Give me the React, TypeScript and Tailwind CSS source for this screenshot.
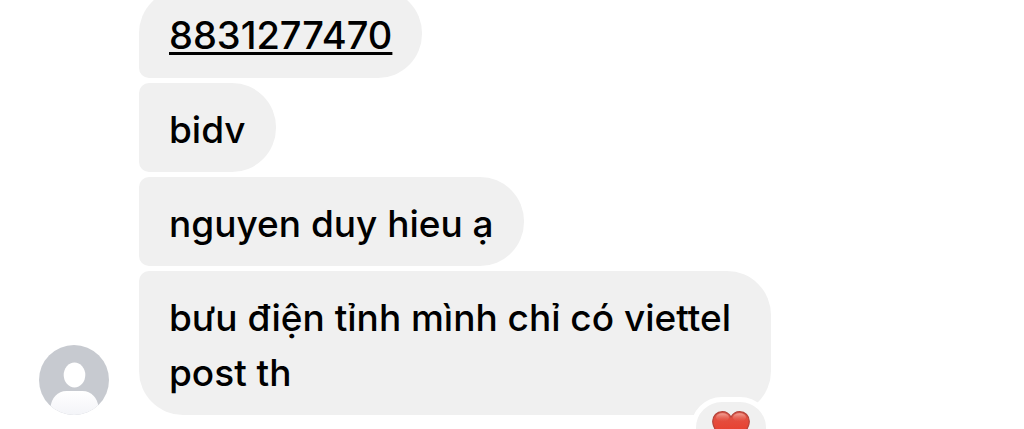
import clsx from "clsx";

interface Message {
  id: number;
  text: string;
  isNumber?: boolean;
  reaction?: boolean;
}

const messages: Message[] = [
  { id: 1, text: "8831277470", isNumber: true },
  { id: 2, text: "bidv" },
  { id: 3, text: "nguyen duy hieu ạ" },
  { id: 4, text: "bưu điện tỉnh mình chỉ có viettel post th", reaction: true },
];

function Avatar() {
  return (
    <svg viewBox="0 0 70 70" className="size-[70px] shrink-0" role="img" aria-label="Avatar">
      <defs>
        <clipPath id="avatar-clip">
          <circle cx="35" cy="35" r="35" />
        </clipPath>
        <linearGradient id="avatar-body" x1="0" y1="0" x2="0" y2="1">
          <stop offset="0" stopColor="#ffffff" />
          <stop offset="1" stopColor="#f3f4f8" />
        </linearGradient>
      </defs>
      <g clipPath="url(#avatar-clip)">
        <rect width="70" height="70" fill="#c7cad0" />
        <ellipse cx="35.5" cy="30" rx="10.8" ry="12.4" fill="#ffffff" />
        <path d="M11.500 62C12.500 53 18.500 46 27.500 46H43.500C52.500 46 58.500 53 59.500 62V70H11.500Z" fill="url(#avatar-body)" />
      </g>
    </svg>
  );
}

function HeartIcon() {
  return (
    <svg viewBox="0 0 38 34" className="h-[34px] w-[38px]" aria-hidden="true">
      <defs>
        <linearGradient id="heart-fill" x1="0" y1="0" x2="0" y2="1">
          <stop offset="0" stopColor="#d9574b" />
          <stop offset="0.300" stopColor="#e54b3c" />
          <stop offset="0.600" stopColor="#e8402f" />
          <stop offset="1" stopColor="#cf2a1e" />
        </linearGradient>
        <linearGradient id="heart-shine" x1="0" y1="0" x2="0" y2="1">
          <stop offset="0" stopColor="#f7b5aa" stopOpacity="0.800" />
          <stop offset="1" stopColor="#ee6a5a" stopOpacity="0" />
        </linearGradient>
      </defs>
      <path
        d="M19 6C17 2.500 14 .7 10.300 .7C4.800 .7 .7 4.800 .7 10.500C.7 19.500 10 27 19 33.300C28 27 37.300 19.500 37.300 10.500C37.300 4.800 33.200 .7 27.700 .7C24 .7 21 2.500 19 6Z"
        fill="url(#heart-fill)"
        stroke="#b5453c"
        strokeWidth="1.2"
      />
      <ellipse cx="10.500" cy="6.500" rx="6.500" ry="4.200" fill="url(#heart-shine)" />
      <ellipse cx="27.500" cy="6.500" rx="6.500" ry="4.200" fill="url(#heart-shine)" />
    </svg>
  );
}

function MessageBubble({ message, isFirst, isLast }: { message: Message; isFirst: boolean; isLast: boolean }) {
  return (
    <li
      className={clsx(
        "relative max-w-[632px] rounded-r-[44px] bg-[#f0f0f0] px-[30px] pt-[19px] pb-[15px]",
        isFirst ? "rounded-tl-[44px]" : "rounded-tl-[10px]",
        isLast ? "rounded-bl-[44px]" : "rounded-bl-[10px]",
      )}
    >
      {message.isNumber ? (
        <a
          href={`tel:${message.text}`}
          className="block text-[38px] leading-[55px] underline decoration-3 underline-offset-3"
        >
          {message.text}
        </a>
      ) : (
        <p>{message.text}</p>
      )}
      {message.reaction && (
        <button
          type="button"
          aria-label="Reaction"
          className="absolute right-0 top-full -mt-[18px] rounded-full border-[5px] border-white bg-[#f0f0f0] px-4 py-[9px]"
        >
          <HeartIcon />
        </button>
      )}
    </li>
  );
}

export default function App() {
  return (
    <main className="h-screen overflow-hidden bg-white font-['Inter','Noto_Sans',sans-serif] text-[37px] leading-[55px] font-medium text-black">
      <div className="-mt-[11px] flex items-end gap-[30px] px-[39px]">
        <Avatar />
        <ul className="flex min-w-0 flex-1 flex-col items-start gap-[5px]">
          {messages.map((message, i) => (
            <MessageBubble
              key={message.id}
              message={message}
              isFirst={i === 0}
              isLast={i === messages.length - 1}
            />
          ))}
        </ul>
      </div>
    </main>
  );
}
